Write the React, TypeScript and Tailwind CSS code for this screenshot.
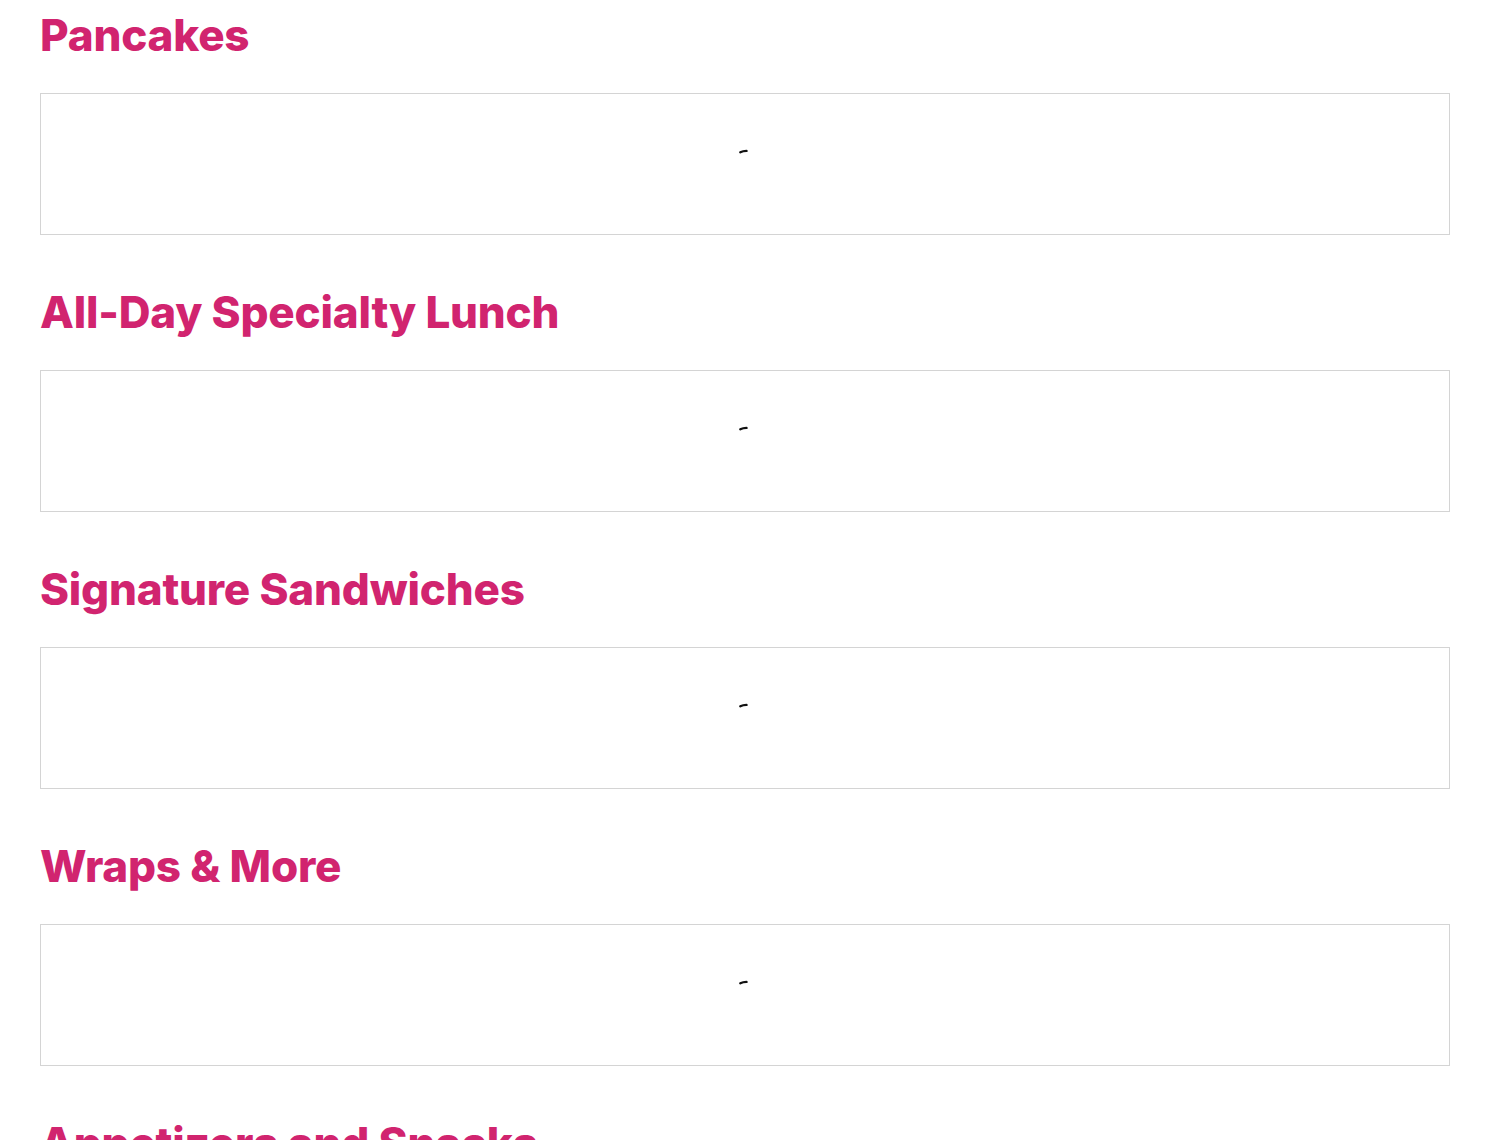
import React from 'react';

const sections = [
  'Pancakes',
  'All-Day Specialty Lunch',
  'Signature Sandwiches',
  'Wraps & More',
  'Appetizers and Snacks',
];

// small loading spinner shown while each menu section loads
function Spinner() {
  return (
    <svg width="32" height="32" viewBox="0 0 32 32" className="block">
      <path d="M11.3 4.3 Q14 2.9 17.5 2.9" fill="none" stroke="#111" strokeWidth="2.4" strokeLinecap="round" />
    </svg>
  );
}

export default function App() {
  return (
    <div className="h-[1140px] overflow-hidden bg-white px-10 pt-[4px] font-['Inter','Liberation_Sans',sans-serif]">
      {sections.map((title) => (
        <section key={title} className="mb-[46px]">
          <h2 className="text-[44px] leading-[62px] font-extrabold text-[#d1246f] tracking-[-0.2px] mb-[27px]">
            {title}
          </h2>
          <div className="h-[142px] border border-[#d4d4d4] flex items-center justify-center">
            <Spinner />
          </div>
        </section>
      ))}
    </div>
  );
}
